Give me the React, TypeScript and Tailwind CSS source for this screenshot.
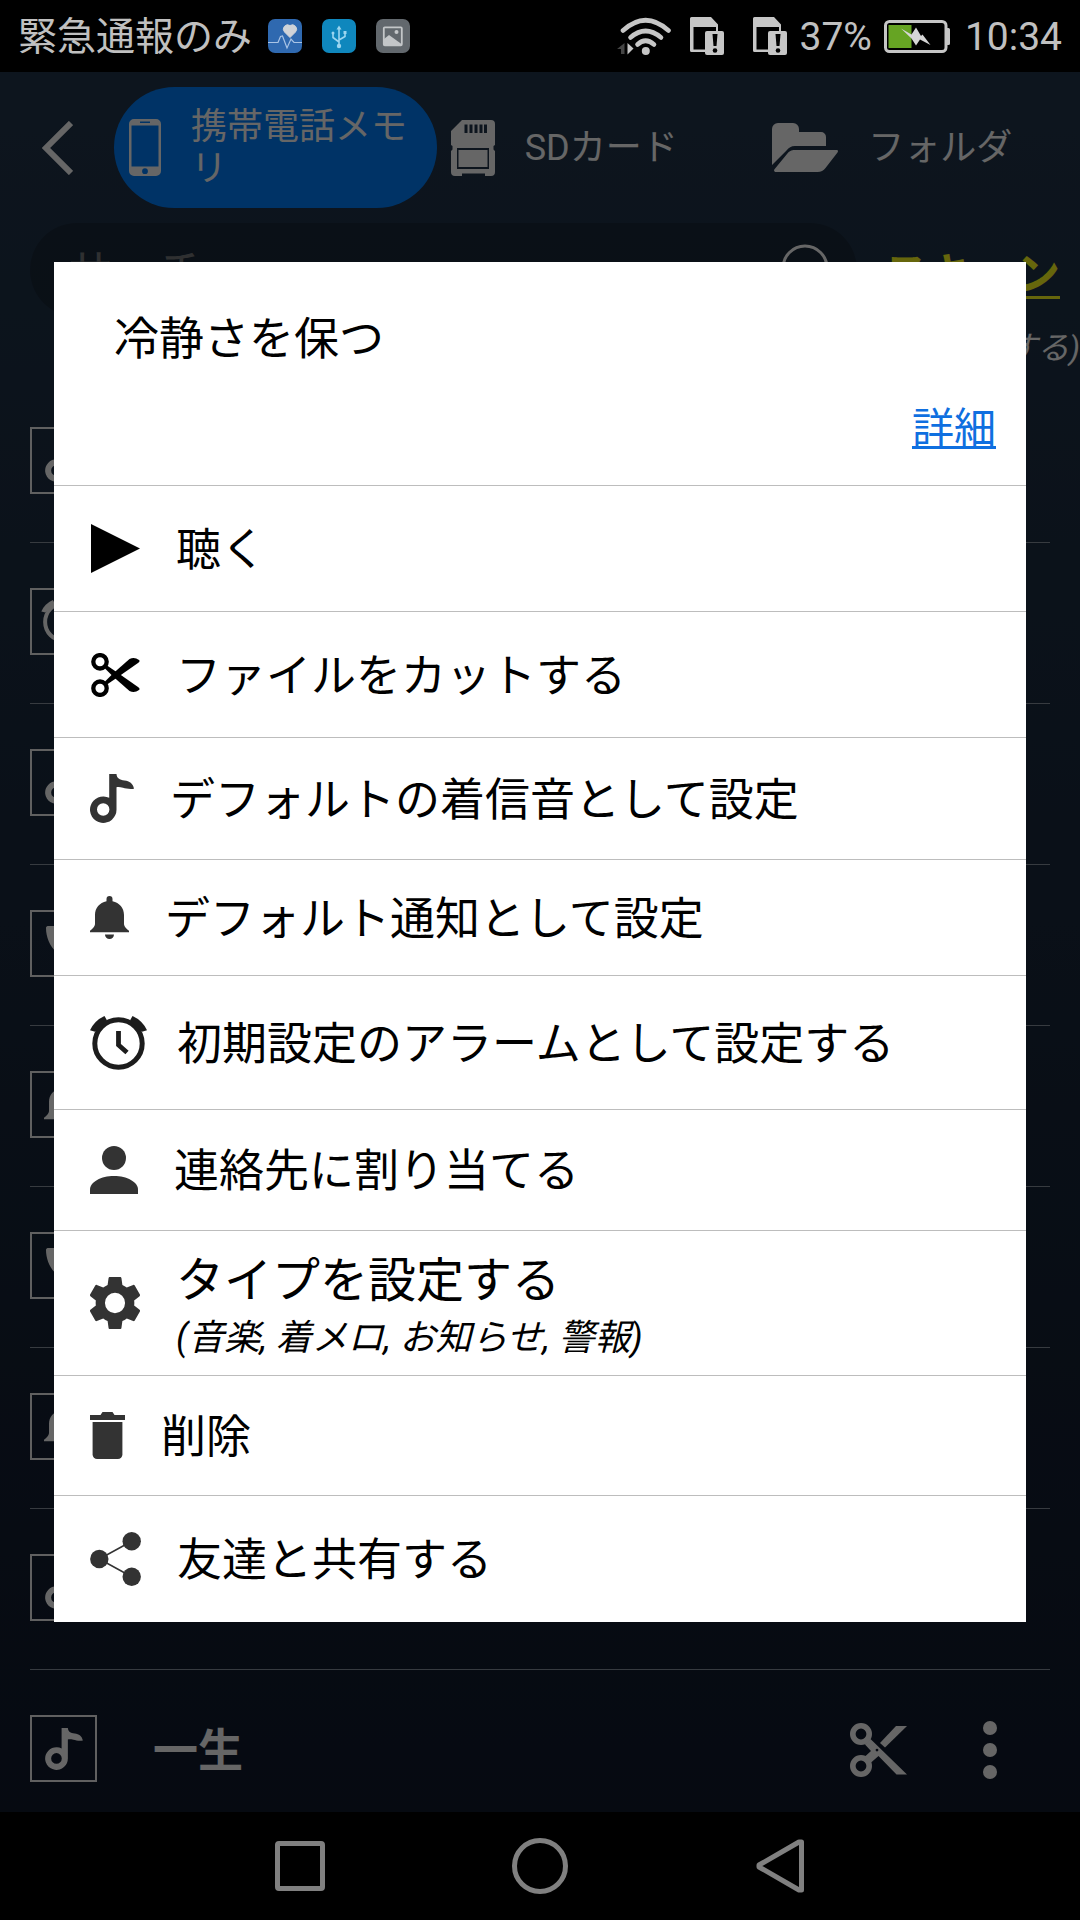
import type { ReactNode } from "react";
import { MdCall } from "react-icons/md";

type IconProps = { className?: string };

function NoteIcon({ className }: IconProps) {
  return (
    <svg className={className} viewBox="0 0 44 49" fill="currentColor" aria-hidden="true">
      <path
        fillRule="evenodd"
        d="M19.2 0h7.3c.3 4 3 6 8 6.5s8.500 3 9.500 8.200c-5 .6-8-.3-11-1s-5-.7-6.500-.4V35.500A13.250 13.250 0 1 1 19.200 23.800zM13.200 29.300a6.200 6.200 0 1 0 0 12.400 6.200 6.200 0 0 0 0-12.400z"
      />
    </svg>
  );
}

function BellIcon({ className }: IconProps) {
  return (
    <svg className={className} viewBox="0 0 39 43" fill="currentColor" aria-hidden="true">
      <path d="M16.500 5.300V3a3 3 0 0 1 6 0v2.300C29.500 6.800 34 12 34 19v8.500c0 2.500 1.200 4.200 5 7.200v1.600H0v-1.600c3.800-3 5-4.700 5-7.200V19C5 12 9.500 6.800 16.500 5.300z" />
      <path d="M15 38.500h9a4.500 4.500 0 0 1-9 0z" />
    </svg>
  );
}

function AlarmIcon({ className }: IconProps) {
  return (
    <svg className={className} viewBox="0 0 57 54" fill="none" stroke="currentColor" aria-hidden="true">
      <circle cx="28.500" cy="27.500" r="23.700" strokeWidth="5" />
      <path d="M28.500 15v14l8.500 7.500" strokeWidth="4.800" />
      <path d="M0 14.300Q4.500 4.500 14.500 0l2.500 4.500L5 15.800z" fill="currentColor" stroke="none" />
      <path d="M57 14.300Q52.500 4.500 42.500 0L40 4.500l12 11.300z" fill="currentColor" stroke="none" />
    </svg>
  );
}

function PlayIcon({ className }: IconProps) {
  return (
    <svg className={className} viewBox="0 0 50 49" fill="currentColor" aria-hidden="true">
      <path d="M1 0l49 24.500L1 49z" />
    </svg>
  );
}

function CutIcon({ className }: IconProps) {
  return (
    <svg className={className} viewBox="0 0 50 44" fill="currentColor" aria-hidden="true">
      <circle cx="10" cy="8.800" r="6.700" fill="none" stroke="currentColor" strokeWidth="4.300" />
      <circle cx="10" cy="35.200" r="6.700" fill="none" stroke="currentColor" strokeWidth="4.300" />
      <path d="M15 15.500l2-3L28 20 48 34q2.500 1.800 1 3-4.500 3.500-9.500 1L23 23.500z" />
      <path d="M15 28.500l2 3L28 24 48 10q2.500-1.800 1-3-4.500-3.500-9.500-1L23 20.500z" />
    </svg>
  );
}

function PersonIcon({ className }: IconProps) {
  return (
    <svg className={className} viewBox="0 0 48 48" fill="currentColor" aria-hidden="true">
      <circle cx="24" cy="12" r="12" />
      <path d="M0 48v-4.500C0 36 11 30 24 30s24 6 24 13.500V48z" />
    </svg>
  );
}

function GearIcon({ className }: IconProps) {
  return (
    <svg className={className} viewBox="2.300 2 19.400 20" preserveAspectRatio="none" fill="currentColor" aria-hidden="true">
      <path d="M19.430 12.980c.04-.32.07-.64.07-.98s-.03-.66-.07-.98l2.110-1.650c.19-.15.24-.42.12-.64l-2-3.460c-.12-.22-.39-.3-.61-.22l-2.490 1c-.52-.4-1.080-.73-1.690-.98l-.38-2.650C14.460 2.180 14.250 2 14 2h-4c-.25 0-.46.18-.49.42l-.38 2.650c-.61.25-1.170.59-1.690.98l-2.490-1c-.23-.09-.49 0-.61.22l-2 3.460c-.13.22-.07.49.12.64l2.110 1.650c-.04.32-.07.65-.07.98s.03.66.07.98l-2.110 1.650c-.19.15-.24.42-.12.64l2 3.460c.12.22.39.3.61.22l2.490-1c.52.4 1.080.73 1.690.98l.38 2.650c.03.24.24.42.49.42h4c.25 0 .46-.18.49-.42l.38-2.650c.61-.25 1.170-.59 1.690-.98l2.490 1c.23.09.49 0 .61-.22l2-3.460c.12-.22.07-.49-.12-.64l-2.110-1.650zM12 15.900a3.900 3.900 0 1 1 0-7.800 3.900 3.900 0 0 1 0 7.800z" />
    </svg>
  );
}

function TrashIcon({ className }: IconProps) {
  return (
    <svg className={className} viewBox="0 0 35 47" fill="currentColor" aria-hidden="true">
      <path d="M0 3h10.500l2-3h10l2 3H35v5H0z" />
      <path d="M2.600 10h29.800v32.500a4.500 4.500 0 0 1-4.500 4.500H7.100a4.500 4.500 0 0 1-4.500-4.500z" />
    </svg>
  );
}

function ShareIcon({ className }: IconProps) {
  return (
    <svg className={className} viewBox="0 0 51 54" fill="currentColor" aria-hidden="true">
      <path d="M41.700 9.200L9.300 27l32.400 17.800" fill="none" stroke="currentColor" strokeWidth="1.600" />
      <circle cx="9.300" cy="27" r="9.200" />
      <circle cx="41.700" cy="9.200" r="9.200" />
      <circle cx="41.700" cy="44.800" r="9.200" />
    </svg>
  );
}

function ListCutIcon({ className }: IconProps) {
  return (
    <svg className={className} viewBox="0 0 57 54" fill="currentColor" aria-hidden="true">
      <circle cx="11" cy="11" r="8.200" fill="none" stroke="currentColor" strokeWidth="5.600" />
      <circle cx="11" cy="43" r="8.200" fill="none" stroke="currentColor" strokeWidth="5.600" />
      <path
        fillRule="evenodd"
        d="M15 21.500l5.500-5.500L57 51.500H46.500L28.500 33l-8 7-5.500-6.500 6-5.500zM27 25.700a1.400 1.400 0 1 0 0 2.800 1.400 1.400 0 0 0 0-2.800z"
      />
      <path d="M30 20L46 3h11L35 24.500z" />
    </svg>
  );
}

function PhoneIcon() {
  return (
    <svg className="h-[57px] w-8 shrink-0" viewBox="0 0 32 57" fill="currentColor" aria-hidden="true">
      <path
        fillRule="evenodd"
        d="M5 0h22a5 5 0 0 1 5 5v47a5 5 0 0 1-5 5H5a5 5 0 0 1-5-5V5a5 5 0 0 1 5-5zM2.500 6.500v41h27v-41zM11 2.500v1.500h10V2.500zM16 49.300a2.900 2.900 0 1 0 0 5.800 2.900 2.900 0 0 0 0-5.800z"
      />
    </svg>
  );
}

function SdCardIcon() {
  return (
    <svg className="h-14 w-11 shrink-0" viewBox="0 0 44 56" fill="currentColor" aria-hidden="true">
      <path
        fillRule="evenodd"
        d="M11 0h29a4 4 0 0 1 4 4v21l-1.500 1v3.500L44 31v21a4 4 0 0 1-4 4v0h-6v-2.500H11V56H4a4 4 0 0 1-4-4V31l1.500-1.500V26L0 25V11zM13.500 4.500v8.500h3V4.500zM18.500 4.500v8.500h3V4.500zM23.500 4.500v8.500h3V4.500zM28.500 4.500v8.500h3V4.500zM33 4.500v8.500h3V4.500zM6 28v21h32V28zM7.500 30h29v17h-29z"
      />
    </svg>
  );
}

function FolderIcon() {
  return (
    <svg className="h-[49px] w-[66px] shrink-0" viewBox="0 0 66 49" fill="currentColor" aria-hidden="true">
      <path d="M0 42V6a6 6 0 0 1 6-6h15a6 6 0 0 1 6 6v3h22a5 5 0 0 1 5 5v9H23c-4 0-6 1.500-8.500 4.500z" />
      <path d="M23 27h41.500c1.500 0 2 1 1 2.500L53.500 45c-2 2.700-4.500 4-8 4H4c-1.700 0-2.500-1.300-1.500-2.700L15 31c2.500-3 4-4 8-4z" />
    </svg>
  );
}

function WifiIcon() {
  return (
    <svg className="h-[38px] w-[54px]" viewBox="0 0 54 38" fill="none" aria-hidden="true">
      <g stroke="#c6c6c6" strokeLinecap="round" strokeWidth="4.600">
        <path d="M6 13.500Q28.500-7 51.500 13.500" />
        <path d="M13.500 20.500q15-13 30.500 0" />
        <path d="M20.500 27.500q8-7.500 16.500 0" />
      </g>
      <circle cx="28.800" cy="34" r="4" fill="#c6c6c6" />
      <path d="M10.500 26l6 5.500-6 6z" fill="#c6c6c6" />
      <path d="M7.500 26v11h-3.500v-5H0z" fill="#444" />
    </svg>
  );
}

function SimAlertIcon() {
  return (
    <svg className="h-[38px] w-[34px]" viewBox="0 0 34 38" fill="#c6c6c6" aria-hidden="true">
      <path fillRule="evenodd" d="M1.500 0H21l7 7.500V35H1.500A1.500 1.500 0 0 1 0 33.500v-32A1.500 1.500 0 0 1 1.500 0zM3.500 10v22.500H26V10z" />
      <rect x="15" y="14" width="19" height="24" rx="2" />
      <path d="M22.500 17h5l-1 12h-3z" fill="#000" />
      <circle cx="25" cy="33.500" r="2.300" fill="#000" />
    </svg>
  );
}

function BatteryIcon() {
  return (
    <svg className="h-[33px] w-[66px]" viewBox="0 0 66 33" fill="none" aria-hidden="true">
      <rect x="1.500" y="1.500" width="60.500" height="30" rx="4" stroke="#c6c6c6" strokeWidth="3" />
      <path d="M63 8h1.500A1.500 1.500 0 0 1 66 9.500v14a1.500 1.500 0 0 1-1.500 1.500H63z" fill="#c6c6c6" />
      <rect x="4.500" y="5" width="23" height="23" fill="#66a423" />
      <path d="M17 8.500l10.500 6L32 7.500l5 8.500 1.500-1.500 8 10.500L36 19.500 32 25.500l-4.500-7z" fill="#d6d6d6" />
    </svg>
  );
}

function StatusBar() {
  return (
    <div className="flex h-[72px] shrink-0 items-center bg-black px-[18px] text-[39px] text-[#c0c0c0]">
      <span className="pt-0.5 leading-none">緊急通報のみ</span>
      <div className="ml-4 flex gap-5">
        <svg className="size-[34px]" viewBox="0 0 34 34" fill="none" aria-hidden="true">
          <rect width="34" height="34" rx="7" fill="#2f69b0" />
          <path d="M22 18.500l-5.500-5.500a4.300 4.300 0 0 1 5.500-6.500 4.300 4.300 0 0 1 5.500 6.500z" fill="#d0d3d8" stroke="#d0d3d8" strokeLinejoin="round" />
          <path d="M0 23.500h10l2.500-6 2-.500 4.500 12 4-9 3 3.500h8" stroke="#a9c4e6" strokeWidth="1.200" />
        </svg>
        <svg className="size-[34px]" viewBox="0 0 34 34" fill="none" stroke="#9cd6f0" strokeWidth="1.600" aria-hidden="true">
          <rect width="34" height="34" rx="7" fill="#0f87bd" stroke="none" />
          <path d="M17 9v18M11 14v4.500l6 4.500M23 13v4.500L17 21" />
          <path d="M17 6.500l2.500 4h-5z" fill="#9cd6f0" stroke="none" />
          <circle cx="17" cy="27" r="2.200" fill="#9cd6f0" stroke="none" />
          <circle cx="11" cy="14" r="1.500" fill="#9cd6f0" stroke="none" />
          <path d="M21.500 12h3v3h-3z" fill="#9cd6f0" stroke="none" />
        </svg>
        <svg className="size-[34px]" viewBox="0 0 34 34" fill="none" aria-hidden="true">
          <rect width="34" height="34" rx="7" fill="#62686d" />
          <rect x="7.800" y="8.300" width="18" height="18" rx="1" stroke="#c3c6c8" strokeWidth="1.800" />
          <path d="M8 20l5-4 12.500 9v1.500H8z" fill="#c3c6c8" />
          <circle cx="20.500" cy="13" r="2" fill="#c3c6c8" />
        </svg>
      </div>
      <div className="ml-auto flex items-center">
        <WifiIcon />
        <span className="ml-[19px] flex gap-[29px]">
          <SimAlertIcon />
          <SimAlertIcon />
        </span>
        <span className="ml-3 pt-0.5 leading-none">37%</span>
        <span className="ml-3">
          <BatteryIcon />
        </span>
        <span className="ml-[15px] pt-0.5 leading-none">10:34</span>
      </div>
    </div>
  );
}

function Tab({ icon, label, active = false }: { icon: ReactNode; label: string; active?: boolean }) {
  return (
    <button
      type="button"
      aria-pressed={active}
      className={
        active
          ? "flex h-[121px] min-w-0 flex-1 items-center gap-[30px] rounded-full bg-[#0080ff] pl-[15px] text-left"
          : "flex h-[121px] min-w-0 flex-1 items-center gap-[30px] pl-[14px] text-left"
      }
    >
      {icon}
      <span className="text-4xl leading-[42px]">{label}</span>
    </button>
  );
}

const rowIcons = {
  note: <NoteIcon className="h-[42px] w-[38px]" />,
  alarm: <AlarmIcon className="h-[43px] w-[46px]" />,
  call: <MdCall className="size-12" aria-hidden="true" />,
  bell: <BellIcon className="h-[43px] w-[39px]" />,
};

const rows: { icon: keyof typeof rowIcons; title: string }[] = [
  { icon: "note", title: "" },
  { icon: "alarm", title: "" },
  { icon: "note", title: "" },
  { icon: "call", title: "" },
  { icon: "bell", title: "" },
  { icon: "call", title: "" },
  { icon: "bell", title: "" },
  { icon: "note", title: "" },
  { icon: "note", title: "一生" },
];

function TrackRow({ icon, title }: { icon: ReactNode; title: string }) {
  return (
    <li className="flex h-[161px] items-center border-b border-[#8b93a0] pb-[3px] pr-[53px]">
      <span className="flex size-[67px] items-center justify-center border-2 border-[#f0f0f0]">{icon}</span>
      <span className="ml-14 flex-1 pt-1.5 text-[45px] font-bold leading-none">{title}</span>
      <button type="button" aria-label="カット" className="pt-0.5">
        <ListCutIcon className="h-[54px] w-[57px]" />
      </button>
      <button type="button" aria-label="メニュー" className="ml-[76px] flex flex-col gap-2 pt-0.5">
        <span className="size-[14px] rounded-full bg-white" />
        <span className="size-[14px] rounded-full bg-white" />
        <span className="size-[14px] rounded-full bg-white" />
      </button>
    </li>
  );
}

const actions: { label: string; note?: string; height: string; icon: ReactNode }[] = [
  { label: "聴く", height: "h-[125px]", icon: <PlayIcon className="h-[49px] w-[50px] text-black" /> },
  { label: "ファイルをカットする", height: "h-[125px]", icon: <CutIcon className="h-11 w-[50px] text-black" /> },
  { label: "デフォルトの着信音として設定", height: "h-[121px]", icon: <NoteIcon className="h-[49px] w-11" /> },
  { label: "デフォルト通知として設定", height: "h-[115px]", icon: <BellIcon className="h-[43px] w-[39px]" /> },
  {
    label: "初期設定のアラームとして設定する",
    height: "h-[133px]",
    icon: <AlarmIcon className="-mr-[6px] h-[54px] w-[57px] text-[#1c1c1c]" />,
  },
  { label: "連絡先に割り当てる", height: "h-[120px]", icon: <PersonIcon className="size-12" /> },
  {
    label: "タイプを設定する",
    note: "(音楽, 着メロ, お知らせ, 警報)",
    height: "h-[144px]",
    icon: <GearIcon className="h-[52px] w-[50px]" />,
  },
  { label: "削除", height: "h-[119px]", icon: <TrashIcon className="h-[47px] w-[35px]" /> },
  { label: "友達と共有する", height: "h-[126px]", icon: <ShareIcon className="h-[54px] w-[51px]" /> },
];

function ActionDialog() {
  return (
    <div role="dialog" aria-label="冷静さを保つ" className="w-full bg-white text-black">
      <div className="flex h-[224px] flex-col border-b border-[#bdbdbd] pl-[60px] pr-[30px] pt-[45px]">
        <h2 className="text-[45px] leading-[66px]">冷静さを保つ</h2>
        <a href="#details" className="mt-[25px] self-end text-[42px] leading-[62px] text-[#0f6fe0] underline decoration-[3px] underline-offset-[3px]">
          詳細
        </a>
      </div>
      <ul>
        {actions.map((a) => (
          <li key={a.label} className="border-b border-[#bdbdbd] last:border-b-0">
            <button type="button" className={`flex w-full items-center gap-9 pl-9 text-left text-[#333] ${a.height}`}>
              <span className="shrink-0">{a.icon}</span>
              {a.note !== undefined ? (
                <span className="flex flex-col pt-1 text-black">
                  <span className="text-5xl leading-[66px]">{a.label}</span>
                  <span className="text-4xl italic leading-[48px]">{a.note}</span>
                </span>
              ) : (
                <span className="pt-1 text-[45px] leading-[66px] text-black">{a.label}</span>
              )}
            </button>
          </li>
        ))}
      </ul>
    </div>
  );
}

function NavBar() {
  return (
    <nav className="flex h-[108px] shrink-0 items-center justify-center gap-[180px] bg-black text-[#808080]">
      <button type="button" aria-label="履歴" className="flex w-[60px] justify-center">
        <span className="size-[50px] rounded border-[5px] border-current" />
      </button>
      <button type="button" aria-label="ホーム" className="flex w-[60px] justify-center">
        <span className="size-14 rounded-full border-[5px] border-current" />
      </button>
      <button type="button" aria-label="戻る" className="flex w-[60px] justify-center">
        <svg className="h-[54px] w-12" viewBox="0 0 48 54" fill="none" stroke="currentColor" strokeWidth="5" strokeLinejoin="round" aria-hidden="true">
          <path d="M45.500 3v48h-2.500L3 28v-2L43 3z" />
        </svg>
      </button>
    </nav>
  );
}

export default function App() {
  return (
    <div className="flex h-screen flex-col overflow-hidden font-[Roboto,'Noto_Sans_CJK_JP',sans-serif]">
      <StatusBar />
      <main className="relative min-h-0 flex-1 overflow-hidden bg-linear-to-b from-[#22364c] to-[#101a2c] text-white">
        <header className="flex items-center pl-[42px] pt-[15px]">
          <button type="button" aria-label="戻る" className="mr-[41px]">
            <svg className="h-[54px] w-[31px]" viewBox="0 0 31 54" fill="none" stroke="currentColor" strokeWidth="6" aria-hidden="true">
              <path d="M29 2L4 27l25 25" />
            </svg>
          </button>
          <Tab active icon={<PhoneIcon />} label="携帯電話メモリ" />
          <Tab icon={<SdCardIcon />} label="SDカード" />
          <Tab icon={<FolderIcon />} label="フォルダ" />
        </header>
        <div className="mt-[15px] flex items-center gap-[27px] pl-[30px] pr-5">
          <label className="flex h-[94px] flex-1 items-center rounded-full bg-black/20 pl-[38px] pr-5">
            <input
              type="text"
              aria-label="サーチ"
              placeholder="サーチ"
              className="min-w-0 flex-1 bg-transparent pt-1.5 text-[45px] placeholder:text-[#77797c]"
            />
            <svg className="size-[55px]" viewBox="0 0 55 55" fill="none" stroke="currentColor" strokeWidth="3" aria-hidden="true">
              <circle cx="23" cy="25" r="22" />
              <path d="M38 41l14 13" />
            </svg>
          </label>
          <a href="#scan" className="pt-2.5 text-[44px] font-bold text-[#ffff1e] underline decoration-[3px] underline-offset-[6px]">
            スキャン
          </a>
        </div>
        <p className="flex h-[65px] items-center justify-end pb-1 text-[32px] italic">する)</p>
        <ul className="px-[30px]">
          {rows.map((row, i) => (
            <TrackRow key={i} icon={rowIcons[row.icon]} title={row.title} />
          ))}
        </ul>
        <div className="absolute inset-0 flex items-center justify-center bg-black/60 px-[54px]">
          <ActionDialog />
        </div>
      </main>
      <NavBar />
    </div>
  );
}
